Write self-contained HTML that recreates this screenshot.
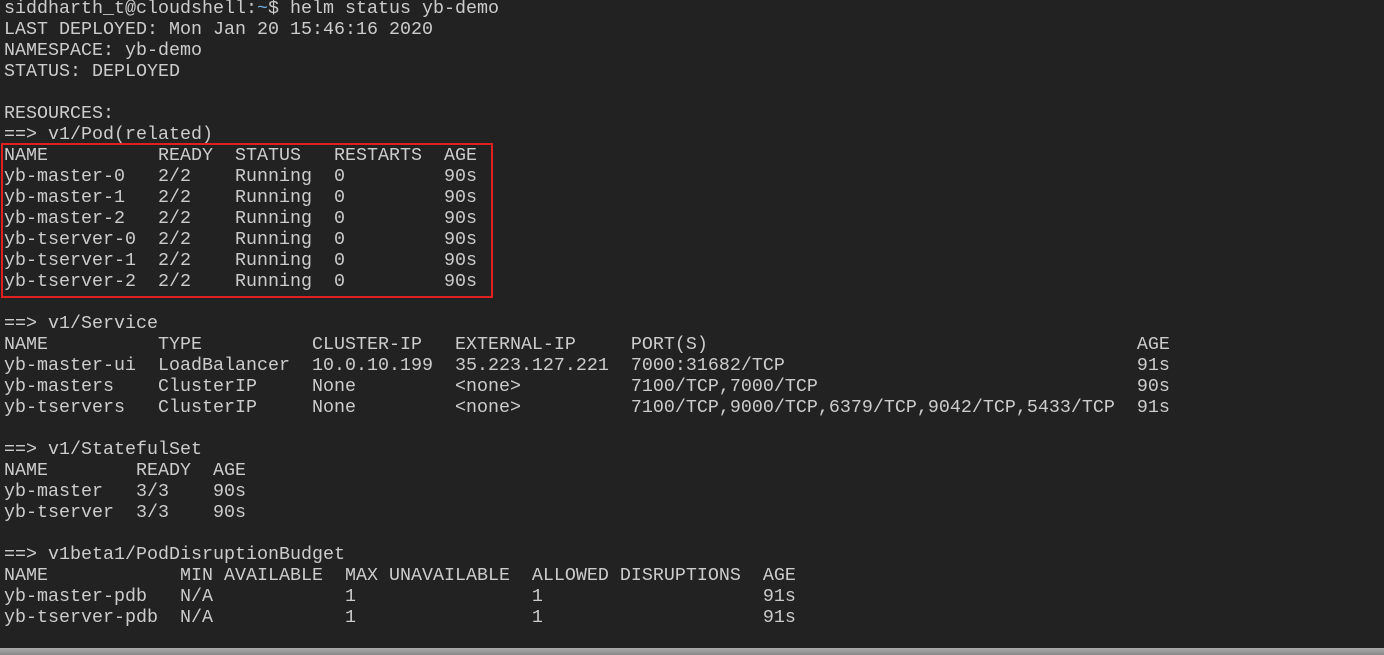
<!DOCTYPE html>
<html><head><style>
html,body{margin:0;padding:0;width:1384px;height:655px;overflow:hidden;background:#222222;}
pre{position:absolute;left:4px;top:-2px;margin:0;font-family:"Liberation Mono",monospace;font-size:18.33px;line-height:21px;color:#cccccc;}
.t{color:#6fa8dc;}
.box{position:absolute;left:1px;top:143px;width:488px;height:151px;border:2px solid #e0201f;}
.bar{position:absolute;left:0;top:648px;width:1384px;height:7px;background:linear-gradient(#aaa,#888);}
</style></head><body>
<pre>siddharth_t@cloudshell:<span class="t">~</span>$ helm status yb-demo
LAST DEPLOYED: Mon Jan 20 15:46:16 2020
NAMESPACE: yb-demo
STATUS: DEPLOYED

RESOURCES:
==> v1/Pod(related)
NAME          READY  STATUS   RESTARTS  AGE
yb-master-0   2/2    Running  0         90s
yb-master-1   2/2    Running  0         90s
yb-master-2   2/2    Running  0         90s
yb-tserver-0  2/2    Running  0         90s
yb-tserver-1  2/2    Running  0         90s
yb-tserver-2  2/2    Running  0         90s

==> v1/Service
NAME          TYPE          CLUSTER-IP   EXTERNAL-IP     PORT(S)                                       AGE
yb-master-ui  LoadBalancer  10.0.10.199  35.223.127.221  7000:31682/TCP                                91s
yb-masters    ClusterIP     None         &lt;none&gt;          7100/TCP,7000/TCP                             90s
yb-tservers   ClusterIP     None         &lt;none&gt;          7100/TCP,9000/TCP,6379/TCP,9042/TCP,5433/TCP  91s

==> v1/StatefulSet
NAME        READY  AGE
yb-master   3/3    90s
yb-tserver  3/3    90s

==> v1beta1/PodDisruptionBudget
NAME            MIN AVAILABLE  MAX UNAVAILABLE  ALLOWED DISRUPTIONS  AGE
yb-master-pdb   N/A            1                1                    91s
yb-tserver-pdb  N/A            1                1                    91s
</pre>
<div class="box"></div>
<div class="bar"></div>
</body></html>
